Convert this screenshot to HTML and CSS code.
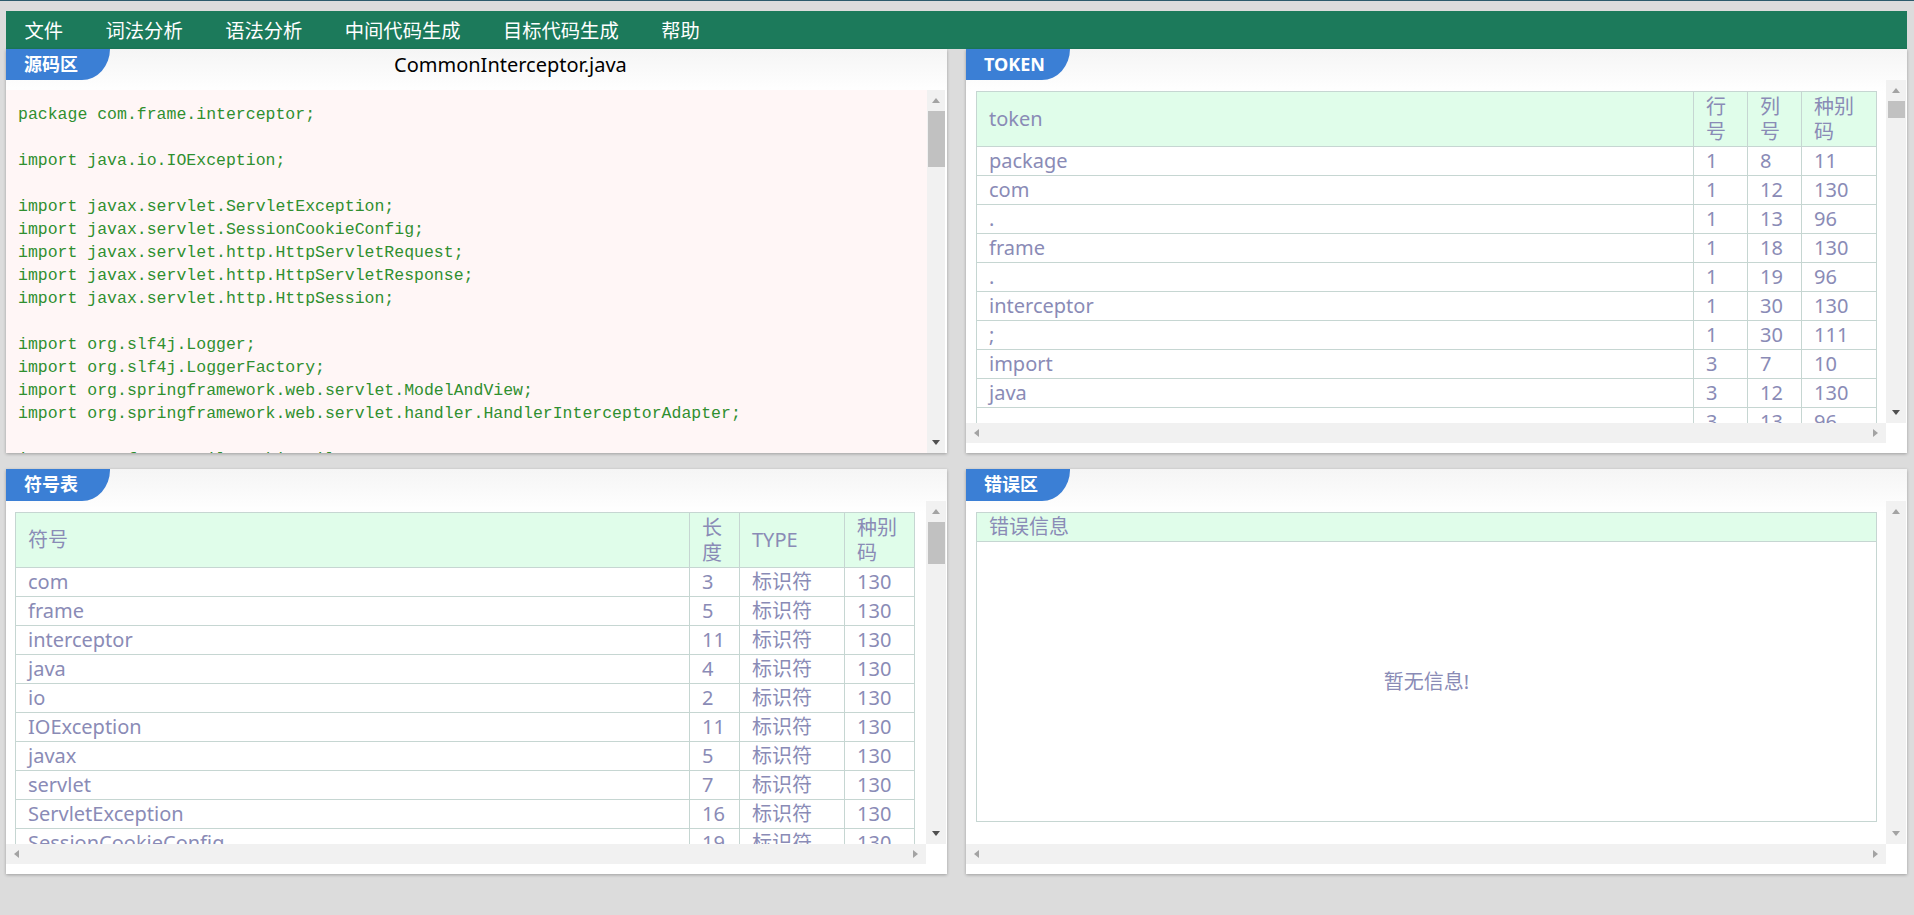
FILE: index.html
```html
<!DOCTYPE html>
<html lang="zh-CN">
<head>
<meta charset="utf-8">
<title>编译器</title>
<link rel="stylesheet" href="styles.css">
</head>
<body>
<nav class="menubar">
  <span class="menu-item">文件</span>
  <span class="menu-item">词法分析</span>
  <span class="menu-item">语法分析</span>
  <span class="menu-item">中间代码生成</span>
  <span class="menu-item">目标代码生成</span>
  <span class="menu-item">帮助</span>
</nav>
<main class="board">
  <section class="panel">
    <div class="panel-head">
      <div class="tab">源码区</div>
      <div class="file-title">CommonInterceptor.java</div>
    </div>
    <div class="code-area">
      <pre class="code">package com.frame.interceptor;

import java.io.IOException;

import javax.servlet.ServletException;
import javax.servlet.SessionCookieConfig;
import javax.servlet.http.HttpServletRequest;
import javax.servlet.http.HttpServletResponse;
import javax.servlet.http.HttpSession;

import org.slf4j.Logger;
import org.slf4j.LoggerFactory;
import org.springframework.web.servlet.ModelAndView;
import org.springframework.web.servlet.handler.HandlerInterceptorAdapter;

import com.frame.util.CookieUtil;</pre>
      <div class="vbar vbar-code">
        <div class="btn"><i class="tri tri-up"></i></div>
        <div class="thumb thumb-code"></div>
        <div class="track-fill"></div>
        <div class="btn"><i class="tri tri-down on"></i></div>
      </div>
    </div>
  </section>

  <section class="panel">
    <div class="panel-head">
      <div class="tab">TOKEN</div>
    </div>
    <div class="scroll-box">
      <div class="scroll-content">
        <table class="grid-table token-table">
          <colgroup><col><col class="c-54"><col class="c-54"><col class="c-75"></colgroup>
          <thead>
            <tr><th>token</th><th>行号</th><th>列号</th><th>种别码</th></tr>
          </thead>
          <tbody>
            <tr><td>package</td><td>1</td><td>8</td><td>11</td></tr>
            <tr><td>com</td><td>1</td><td>12</td><td>130</td></tr>
            <tr><td>.</td><td>1</td><td>13</td><td>96</td></tr>
            <tr><td>frame</td><td>1</td><td>18</td><td>130</td></tr>
            <tr><td>.</td><td>1</td><td>19</td><td>96</td></tr>
            <tr><td>interceptor</td><td>1</td><td>30</td><td>130</td></tr>
            <tr><td>;</td><td>1</td><td>30</td><td>111</td></tr>
            <tr><td>import</td><td>3</td><td>7</td><td>10</td></tr>
            <tr><td>java</td><td>3</td><td>12</td><td>130</td></tr>
            <tr><td>.</td><td>3</td><td>13</td><td>96</td></tr>
          </tbody>
        </table>
      </div>
      <div class="vbar">
        <div class="btn"><i class="tri tri-up"></i></div>
        <div class="thumb thumb-token"></div>
        <div class="track-fill"></div>
        <div class="btn"><i class="tri tri-down on"></i></div>
      </div>
      <div class="hbar">
        <div class="btn"><i class="tri tri-left"></i></div>
        <div class="track-fill"></div>
        <div class="btn"><i class="tri tri-right"></i></div>
      </div>
      <div class="corner"></div>
    </div>
  </section>

  <section class="panel">
    <div class="panel-head panel-head-low">
      <div class="tab">符号表</div>
    </div>
    <div class="scroll-box">
      <div class="scroll-content">
        <table class="grid-table symbol-table">
          <colgroup><col><col class="c-50"><col class="c-105"><col class="c-70"></colgroup>
          <thead>
            <tr><th>符号</th><th>长度</th><th>TYPE</th><th>种别码</th></tr>
          </thead>
          <tbody>
            <tr><td>com</td><td>3</td><td>标识符</td><td>130</td></tr>
            <tr><td>frame</td><td>5</td><td>标识符</td><td>130</td></tr>
            <tr><td>interceptor</td><td>11</td><td>标识符</td><td>130</td></tr>
            <tr><td>java</td><td>4</td><td>标识符</td><td>130</td></tr>
            <tr><td>io</td><td>2</td><td>标识符</td><td>130</td></tr>
            <tr><td>IOException</td><td>11</td><td>标识符</td><td>130</td></tr>
            <tr><td>javax</td><td>5</td><td>标识符</td><td>130</td></tr>
            <tr><td>servlet</td><td>7</td><td>标识符</td><td>130</td></tr>
            <tr><td>ServletException</td><td>16</td><td>标识符</td><td>130</td></tr>
            <tr><td>SessionCookieConfig</td><td>19</td><td>标识符</td><td>130</td></tr>
          </tbody>
        </table>
      </div>
      <div class="vbar">
        <div class="btn"><i class="tri tri-up"></i></div>
        <div class="thumb thumb-symbol"></div>
        <div class="track-fill"></div>
        <div class="btn"><i class="tri tri-down on"></i></div>
      </div>
      <div class="hbar">
        <div class="btn"><i class="tri tri-left"></i></div>
        <div class="track-fill"></div>
        <div class="btn"><i class="tri tri-right"></i></div>
      </div>
      <div class="corner"></div>
    </div>
  </section>

  <section class="panel">
    <div class="panel-head panel-head-low">
      <div class="tab">错误区</div>
    </div>
    <div class="scroll-box">
      <div class="scroll-content">
        <table class="grid-table error-table">
          <thead>
            <tr><th>错误信息</th></tr>
          </thead>
          <tbody>
            <tr><td class="empty">暂无信息!</td></tr>
          </tbody>
        </table>
      </div>
      <div class="vbar">
        <div class="btn"><i class="tri tri-up"></i></div>
        <div class="track-fill"></div>
        <div class="btn"><i class="tri tri-down"></i></div>
      </div>
      <div class="hbar">
        <div class="btn"><i class="tri tri-left"></i></div>
        <div class="track-fill"></div>
        <div class="btn"><i class="tri tri-right"></i></div>
      </div>
      <div class="corner"></div>
    </div>
  </section>
</main>
</body>
</html>
```

FILE: styles.css
```css
* { box-sizing: border-box; }

html, body { height: 100%; }

body {
  margin: 0;
  padding: 10px 7px 0 6px;
  background: #dcdcdc;
  border-top: 1px solid #2d5b6c;
  font-family: "Noto Sans", "Noto Sans CJK SC", sans-serif;
  overflow: hidden;
}

/* ---------- menu bar ---------- */
.menubar {
  height: 38px;
  background: #1c7a5b;
  display: flex;
  align-items: center;
  gap: 42.5px;
  padding-left: 18.5px;
  color: #fff;
  font-family: "Noto Sans CJK SC", sans-serif;
  font-size: 19.3px;
}
.menu-item { line-height: 38px; white-space: nowrap; }

/* ---------- board ---------- */
.board {
  display: grid;
  grid-template-columns: 941px 941px;
  grid-template-rows: 404px 405px;
  column-gap: 19px;
  row-gap: 16px;
}

.panel {
  background: #fff linear-gradient(#f5f5f5, #ffffff 44px) no-repeat;
  box-shadow: 0 1px 3px rgba(0, 0, 0, 0.28);
  display: flex;
  flex-direction: column;
  min-height: 0;
  overflow: hidden;
}

.panel-head {
  flex: none;
  height: 31px;
  display: flex;
  align-items: center;
}
.panel-head-low { height: 32px; }

.tab {
  width: 104px;
  height: 100%;
  background: #3b7fd5;
  color: #fff;
  font-weight: bold;
  font-size: 18px;
  line-height: 31px;
  padding-left: 18px;
  border-bottom-right-radius: 28px 31px;
  white-space: nowrap;
}

.file-title {
  margin-left: 284px;
  font-size: 20px;
  color: #000;
  line-height: 31px;
}

/* ---------- code ---------- */
.code-area {
  flex: 1;
  min-height: 0;
  margin-top: 10px;
  margin-right: 2px;
  display: flex;
  background: #fff6f6;
}
.code {
  flex: 1;
  margin: 0;
  padding: 13px 12px 0;
  font-family: "Liberation Mono", monospace;
  font-size: 16.5px;
  line-height: 23px;
  color: #2f8f2f;
  overflow: hidden;
  white-space: pre;
}

/* ---------- fake scrollbars ---------- */
.vbar {
  width: 20px;
  background: #f1f1f1;
  display: flex;
  flex-direction: column;
  align-items: center;
}
.vbar-code { width: 18px; }
.hbar {
  height: 20px;
  background: #f1f1f1;
  display: flex;
  align-items: center;
}
.btn {
  flex: none;
  width: 20px;
  height: 21px;
  display: flex;
  align-items: center;
  justify-content: center;
}
.hbar .btn { width: 21px; height: 20px; }
.track-fill { flex: 1; }
.thumb { flex: none; width: 17px; background: #c1c1c1; }
.thumb-code { height: 56px; }
.thumb-token { height: 17px; }
.thumb-symbol { height: 42px; }
.corner { background: #fff; }

.tri { display: block; width: 0; height: 0; }
.tri-up {
  border-left: 4.5px solid transparent;
  border-right: 4.5px solid transparent;
  border-bottom: 5px solid #a3a3a3;
}
.tri-down {
  border-left: 4.5px solid transparent;
  border-right: 4.5px solid transparent;
  border-top: 5px solid #a3a3a3;
}
.tri-left {
  border-top: 4.5px solid transparent;
  border-bottom: 4.5px solid transparent;
  border-right: 5px solid #a3a3a3;
}
.tri-right {
  border-top: 4.5px solid transparent;
  border-bottom: 4.5px solid transparent;
  border-left: 5px solid #a3a3a3;
}
.tri-down.on { border-top-color: #505050; }

.scroll-box {
  flex: 1;
  min-height: 0;
  margin: 0 1px 10px 0;
  display: grid;
  grid-template-columns: 1fr 20px;
  grid-template-rows: 1fr 20px;
}
.scroll-content {
  overflow: hidden;
  padding: 11px 0 0 10px;
  min-height: 0;
}

/* ---------- tables ---------- */
.grid-table {
  border-collapse: collapse;
  table-layout: fixed;
  font-size: 20px;
  color: #8a8bb6;
}
.token-table, .error-table { width: 901px; }
.symbol-table { width: 900px; margin-left: -1px; }
.grid-table th,
.grid-table td {
  border: 1px solid #c6d6d2;
  text-align: left;
  font-weight: normal;
  vertical-align: middle;
  padding: 0 0 0 12px;
  white-space: nowrap;
  overflow: hidden;
}
.grid-table th {
  background: #e0fdea;
  line-height: 25.5px;
  padding: 1.5px 10px 1.5px 12px;
  white-space: normal;
}
.grid-table td { line-height: 28px; }
.error-table th { line-height: 28px; padding-top: 0; padding-bottom: 0; }
.error-table td.empty {
  height: 280px;
  text-align: center;
  padding: 0;
}

.c-54 { width: 54px; }
.c-75 { width: 75px; }
.c-50 { width: 50px; }
.c-105 { width: 105px; }
.c-70 { width: 70px; }
```
